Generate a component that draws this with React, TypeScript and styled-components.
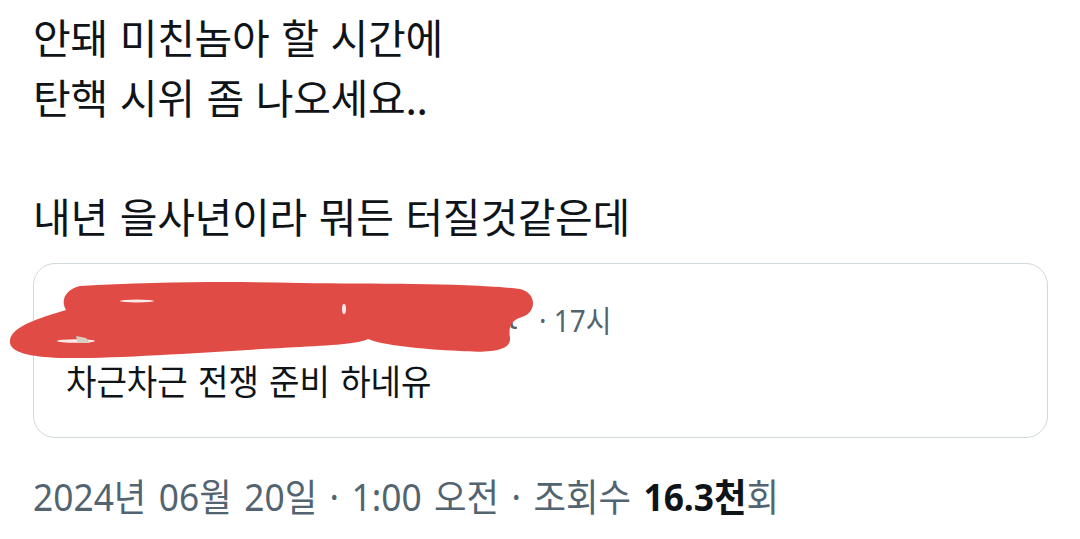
import React from 'react'
import styled, { createGlobalStyle } from 'styled-components'

const Global = createGlobalStyle`
  html, body {
    margin: 0;
    padding: 0;
    background: #ffffff;
  }
  body {
    font-family: "Noto Sans CJK KR", "Noto Sans", sans-serif;
    color: #0f1419;
  }
`

const lines = ['안돼 미친놈아 할 시간에', '탄핵 시위 좀 나오세요..', '', '내년 을사년이라 뭐든 터질것같은데']

const App = () => {
  return (
    <Page>
      <Global />
      <Body>
        {lines.map((l, i) => (
          <Line key={i}>{l || '\u00a0'}</Line>
        ))}
      </Body>
      <Quote>
        <Author>
          <Avatar />
          <Identity>
            <Name>비공개 사용자</Name>
            <Handle>@hidden_account</Handle>
          </Identity>
          <Time>· 17시</Time>
        </Author>
        <QuoteText>차근차근 전쟁 준비 하네유</QuoteText>
        <Scribble viewBox="0 270 560 100" width="560" height="100">
          <path
            d="M 10 340 C 12 326, 40 318, 66 310 C 60 300, 66 289, 80 286 C 150 282, 230 281, 300 283 C 380 284, 470 283, 520 289 C 537 293, 537 312, 522 317 C 512 320, 508 326, 510 338 C 511 351, 490 353, 460 351 C 420 349, 382 345, 368 339 C 360 343, 340 345, 300 347 C 220 351, 120 359, 60 358 C 28 357, 8 352, 10 340 Z"
            fill="#e04c45"
          />
          <ellipse cx="137" cy="301" rx="17" ry="1.4" fill="#fbe9e8" />
          <ellipse cx="76" cy="341" rx="19" ry="1.8" fill="#fbe9e8" />
          <path d="M 76 336 L 86 338 L 90 343 L 78 343 Z" fill="#d9cfbf" />
          <ellipse cx="344" cy="309" rx="2" ry="5" fill="#fbe9e8" />
        </Scribble>
      </Quote>
      <Meta>
        2024년 06월 20일 · 1:00 오전 · 조회수 <Strong>16.3천</Strong>회
      </Meta>
    </Page>
  )
}

export default App

const Page = styled.div`
  width: 1080px;
  height: 539px;
  box-sizing: border-box;
  padding: 7px 32px 0 33px;
  overflow: hidden;
`

const Body = styled.div`
  display: flex;
  flex-direction: column;
`

const Line = styled.div`
  font-size: 41px;
  line-height: 59.7px;
  letter-spacing: -0.3px;
  word-spacing: 3px;
  color: #0f1419;
  white-space: pre;
`

const Quote = styled.div`
  position: relative;
  margin-top: 17px;
  height: 175px;
  border: 1px solid #cfd9de;
  border-radius: 22px;
  box-sizing: border-box;
  padding: 30px 32px 0 32px;
  display: flex;
  flex-direction: column;
`

const Author = styled.div`
  display: flex;
  align-items: center;
  height: 50px;
`

const Avatar = styled.div`
  width: 30px;
  height: 30px;
  border-radius: 50%;
  background: #d9cfbf;
  flex-shrink: 0;
`

const Identity = styled.div`
  width: 421px;
  display: flex;
  justify-content: flex-end;
  gap: 8px;
  overflow: hidden;
  white-space: nowrap;
  font-family: "Noto Sans", "Noto Sans CJK KR", sans-serif;
  font-size: 30px;
`

const Name = styled.span`
  font-weight: 700;
  color: #0f1419;
`

const Handle = styled.span`
  color: #536471;
  letter-spacing: -1px;
`

const Time = styled.span`
  margin-left: 22px;
  font-family: "Noto Sans", "Noto Sans CJK KR", sans-serif;
  font-size: 31px;
  color: #536471;
  white-space: nowrap;
  transform: scaleX(0.9);
  transform-origin: left center;
`

const QuoteText = styled.div`
  margin-top: 14px;
  font-size: 35px;
  line-height: 44px;
  word-spacing: 3px;
  color: #0f1419;
  white-space: nowrap;
  transform: scaleX(0.945);
  transform-origin: left center;
`

const Scribble = styled.svg`
  position: absolute;
  left: -34px;
  top: 6px;
  overflow: visible;
`

const Meta = styled.div`
  margin-top: 38px;
  font-family: "Noto Sans", "Noto Sans CJK KR", sans-serif;
  font-size: 38px;
  line-height: 40px;
  word-spacing: 3.5px;
  color: #536471;
  white-space: nowrap;
  transform: scaleX(0.93);
  transform-origin: left center;
`

const Strong = styled.span`
  font-weight: 700;
  color: #0f1419;
`
